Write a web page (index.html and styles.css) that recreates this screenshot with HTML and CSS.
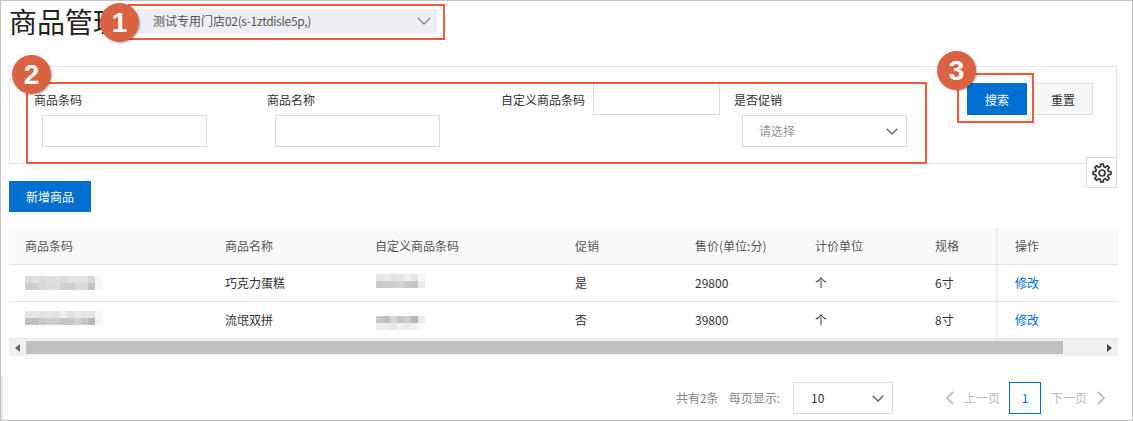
FILE: index.html
```html
<!DOCTYPE html>
<html lang="zh-CN">
<head>
<meta charset="utf-8">
<title>商品管理</title>
<link rel="stylesheet" href="styles.css">
</head>
<body>
<div class="page">
  <header class="head">
    <h1 class="title">商品管理</h1>
    <div class="store">
      <span>测试专用门店<span class="latin">02(s-1ztdisle5p,)</span></span>
      <svg class="chev" width="14" height="8" viewBox="0 0 14 8"><path d="M1 1l6 6 6-6" fill="none" stroke="#7d8794" stroke-width="1.3"/></svg>
    </div>
  </header>

  <section class="filter">
    <div class="field f1">
      <label class="lab">商品条码</label>
      <div class="input stack"></div>
    </div>
    <div class="field f2">
      <label class="lab">商品名称</label>
      <div class="input stack"></div>
    </div>
    <div class="field f3">
      <label class="lab inline">自定义商品条码</label>
      <div class="input short"></div>
    </div>
    <div class="field f4">
      <label class="lab">是否促销</label>
      <div class="input stack select">
        <span class="ph">请选择</span>
        <svg width="12" height="7" viewBox="0 0 12 7"><path d="M.7.7L6 6l5.300-5.300" fill="none" stroke="#666" stroke-width="1.300"/></svg>
      </div>
    </div>
    <div class="actions">
      <button class="btn primary">搜索</button>
      <button class="btn plain">重置</button>
    </div>
  </section>

  <div class="toolbar">
    <button class="btn primary add">新增商品</button>
    <button class="gear" aria-label="设置">
      <svg width="20" height="20" viewBox="0 0 20 20" fill="none" stroke="#3a3a3a" stroke-width="1.700" stroke-linejoin="round">
        <path d="M8.460 3.580L8.590 1.110H11.410L11.540 3.580L13.450 4.370L15.290 2.720L17.280 4.710L15.630 6.550L16.420 8.460L18.890 8.590V11.410L16.420 11.540L15.630 13.450L17.280 15.290L15.290 17.280L13.450 15.630L11.540 16.420L11.410 18.890H8.590L8.460 16.420L6.550 15.630L4.710 17.280L2.720 15.290L4.370 13.450L3.580 11.540L1.110 11.410V8.590L3.580 8.460L4.370 6.550L2.720 4.710L4.710 2.720L6.550 4.370Z"/>
        <circle cx="10" cy="10" r="3"/>
      </svg>
    </button>
  </div>

  <div class="tablewrap">
    <table class="grid">
      <colgroup>
        <col class="c1"><col class="c2"><col class="c3"><col class="c4"><col class="c5"><col class="c6"><col class="c7"><col class="c8">
      </colgroup>
      <thead>
        <tr><th>商品条码</th><th>商品名称</th><th>自定义商品条码</th><th>促销</th><th>售价(单位:分)</th><th>计价单位</th><th>规格</th><th class="fixed">操作</th></tr>
      </thead>
      <tbody>
        <tr>
          <td class="blurcell"><svg class="mosaic" width="84" height="36" viewBox="0 0 84 36">
            <g transform="translate(0 11)"><rect width="7" height="7" fill="#dcdada"/><rect x="7" width="7" height="7" fill="#e2e0de"/><rect x="14" width="7" height="7" fill="#dedada"/><rect x="21" width="7" height="7" fill="#dde0e2"/><rect x="28" width="7" height="7" fill="#dfdfdf"/><rect x="35" width="7" height="7" fill="#dadada"/><rect x="42" width="7" height="7" fill="#e2e2de"/><rect x="49" width="7" height="7" fill="#dfe3e5"/><rect x="56" width="7" height="7" fill="#e2e0e0"/><rect x="63" width="7" height="7" fill="#d6d6d6"/><rect x="70" width="7" height="7" fill="#f4f8fb"/>
            <rect y="7" width="7" height="7" fill="#cdcbcb"/><rect x="7" y="7" width="7" height="7" fill="#d0cfcd"/><rect x="14" y="7" width="7" height="7" fill="#dbd9d9"/><rect x="21" y="7" width="7" height="7" fill="#dedfdc"/><rect x="28" y="7" width="7" height="7" fill="#dcdfe0"/><rect x="35" y="7" width="7" height="7" fill="#cfd1d1"/><rect x="42" y="7" width="7" height="7" fill="#cdcec8"/><rect x="49" y="7" width="7" height="7" fill="#d6dcdd"/><rect x="56" y="7" width="7" height="7" fill="#dbdada"/><rect x="63" y="7" width="7" height="7" fill="#c3c3c3"/><rect x="70" y="7" width="7" height="7" fill="#f6fafc"/></g>
          </svg></td>
          <td>巧克力蛋糕</td>
          <td class="blurcell"><svg class="mosaic" width="56" height="36" viewBox="0 0 56 36">
            <g transform="translate(0 9)"><rect width="7" height="7" fill="#e6e4e4"/><rect x="7" width="7" height="7" fill="#ebeaea"/><rect x="14" width="7" height="7" fill="#e5e4e4"/><rect x="21" width="7" height="7" fill="#e7e6e6"/><rect x="28" width="7" height="7" fill="#efeeec"/><rect x="35" width="7" height="7" fill="#e5e4e3"/><rect x="42" width="7" height="7" fill="#f6f7f9"/>
            <rect y="7" width="7" height="7" fill="#cdcac9"/><rect x="7" y="7" width="7" height="7" fill="#cfcdcc"/><rect x="14" y="7" width="7" height="7" fill="#d2d0cf"/><rect x="21" y="7" width="7" height="7" fill="#d4d2d0"/><rect x="28" y="7" width="7" height="7" fill="#cbc9c5"/><rect x="35" y="7" width="7" height="7" fill="#c8c6c2"/><rect x="42" y="7" width="7" height="7" fill="#e8ebf2"/></g>
          </svg></td>
          <td>是</td><td>29800</td><td>个</td><td>6寸</td><td class="fixed"><a class="link">修改</a></td>
        </tr>
        <tr>
          <td class="blurcell"><svg class="mosaic" width="84" height="36" viewBox="0 0 84 36">
            <g transform="translate(0 9)"><rect width="7" height="7" fill="#e6e5e5"/><rect x="7" width="7" height="7" fill="#e8e6e6"/><rect x="14" width="7" height="7" fill="#e4e2e2"/><rect x="21" width="7" height="7" fill="#e6e6e6"/><rect x="28" width="7" height="7" fill="#e3e3e5"/><rect x="35" width="7" height="7" fill="#f0f0ee"/><rect x="42" width="7" height="7" fill="#e2e2e0"/><rect x="49" width="7" height="7" fill="#e6e8ea"/><rect x="56" width="7" height="7" fill="#eae8e6"/><rect x="63" width="7" height="7" fill="#e6e5e5"/><rect x="70" width="7" height="7" fill="#f6fafc"/>
            <rect y="7" width="7" height="7" fill="#c2c0c0"/><rect x="7" y="7" width="7" height="7" fill="#bfbebe"/><rect x="14" y="7" width="7" height="7" fill="#cbc8c8"/><rect x="21" y="7" width="7" height="7" fill="#cfcdcd"/><rect x="28" y="7" width="7" height="7" fill="#cccccc"/><rect x="35" y="7" width="7" height="7" fill="#c6c6c4"/><rect x="42" y="7" width="7" height="7" fill="#c6c8c2"/><rect x="49" y="7" width="7" height="7" fill="#ccd4d5"/><rect x="56" y="7" width="7" height="7" fill="#c9c6c6"/><rect x="63" y="7" width="7" height="7" fill="#b5b4b8"/><rect x="70" y="7" width="7" height="7" fill="#f1f6fb"/></g>
          </svg></td>
          <td>流氓双拼</td>
          <td class="blurcell"><svg class="mosaic" width="56" height="36" viewBox="0 0 56 36">
            <g transform="translate(0 14)"><rect width="7" height="7" fill="#c9c6c6"/><rect x="7" width="7" height="7" fill="#c2c1bf"/><rect x="14" width="7" height="7" fill="#d6d6d4"/><rect x="21" width="7" height="7" fill="#c5c5c7"/><rect x="28" width="7" height="7" fill="#cdcece"/><rect x="35" width="7" height="7" fill="#bdb5af"/><rect x="42" width="7" height="7" fill="#e2ebf6"/>
            <rect y="7" width="7" height="7" fill="#eeecec"/><rect x="7" y="7" width="7" height="7" fill="#eeeeee"/><rect x="14" y="7" width="7" height="7" fill="#e8e8e8"/><rect x="21" y="7" width="7" height="7" fill="#f1f1f1"/><rect x="28" y="7" width="7" height="7" fill="#ebebeb"/><rect x="35" y="7" width="7" height="7" fill="#f3f2f1"/><rect x="42" y="7" width="7" height="7" fill="#f8fbfe"/></g>
          </svg></td>
          <td>否</td><td>39800</td><td>个</td><td>8寸</td><td class="fixed"><a class="link">修改</a></td>
        </tr>
      </tbody>
    </table>
    <div class="scrollbar">
      <span class="sarrow"><svg width="5" height="8" viewBox="0 0 5 8"><path d="M5 0v8L0 4z" fill="#666"/></svg></span>
      <span class="thumb"></span>
      <span class="srest"></span>
      <span class="sarrow"><svg width="5" height="8" viewBox="0 0 5 8"><path d="M0 0v8l5-4z" fill="#444"/></svg></span>
    </div>
  </div>

  <nav class="pager">
    <span class="muted">共有2条</span>
    <span class="muted perpage">每页显示:</span>
    <div class="input size">
      <span>10</span>
      <svg width="12" height="7" viewBox="0 0 12 7"><path d="M.7.7L6 6l5.300-5.300" fill="none" stroke="#666" stroke-width="1.500"/></svg>
    </div>
    <svg class="pchev" width="9" height="14" viewBox="0 0 9 14"><path d="M8 1L2 7l6 6" fill="none" stroke="#bdbdbd" stroke-width="1.800"/></svg>
    <span class="off prev">上一页</span>
    <span class="cur">1</span>
    <span class="off next">下一页</span>
    <svg class="pchev right" width="9" height="14" viewBox="0 0 9 14"><path d="M1 1l6 6-6 6" fill="none" stroke="#bdbdbd" stroke-width="1.800"/></svg>
  </nav>

  <div class="mark box1"></div>
  <div class="mark box2"></div>
  <div class="mark box3"></div>
  <div class="badge b1">1</div>
  <div class="badge b2">2</div>
  <div class="badge b3">3</div>
  <div class="edge"></div>
</div>
</body>
</html>
```
FILE: styles.css
```css
* { box-sizing: border-box; }
html, body { margin: 0; height: 100%; }
body { background: #fff; color: #333; font: 12px/1.5 "Noto Sans CJK SC", "Noto Sans", sans-serif; overflow: hidden; }
.page { position: relative; height: 421px; padding: 0 14px 0 8px; border: 1px solid #c4c4c4; }

.head { display: flex; height: 65px; align-items: flex-start; }
.title { margin: 5px 0 0; font-size: 28px; font-weight: 400; line-height: 30px; color: #222; }
.store { display: flex; align-items: center; justify-content: space-between; width: 300px; height: 24px; margin: 8px 0 0 16px; padding: 0 6px 0 16px; background: #eceff4; color: #555; font-size: 12px; }
.latin { letter-spacing: -.35px; }

.filter { display: flex; height: 98px; margin-right: 1px; padding: 16px 23px 0 24px; border: 1px solid #e6e6e6; }
.field { flex: none; }
.f1 { width: 233px; }
.f2 { width: 234px; }
.f3 { width: 233px; display: flex; align-items: flex-start; }
.lab { display: block; height: 32px; padding-top: 1px; line-height: 32px; color: #333; }
.inline { margin-right: 8px; }
.input { border: 1px solid #dcdcdc; background: #fff; }
.stack { width: 165px; height: 32px; margin-left: 8px; }
.short { width: 127px; height: 32px; }
.select { display: flex; align-items: center; justify-content: space-between; padding: 0 8px 0 16px; }
.ph { color: #999; }
.actions { display: flex; gap: 6px; margin-left: auto; }
.btn { height: 32px; width: 60px; padding: 1px 0 0; border: 1px solid #dcdcdc; font: inherit; }
.primary { background: #006fcf; border-color: #006fcf; color: #fff; }
.plain { background: #f8f8f8; color: #333; }

.toolbar { display: flex; justify-content: space-between; align-items: flex-start; margin-top: 17px; height: 47px; }
.add { width: 82px; height: 31px; padding: 0; }
.gear { position: relative; display: flex; align-items: center; justify-content: center; width: 31px; height: 31px; margin: -24px 1px 0 0; padding: 0; background: #fff; border: 1px solid #dcdcdc; }

.tablewrap { width: 1109px; }
.grid { width: 1109px; table-layout: fixed; border-collapse: separate; border-spacing: 0; }
.c1 { width: 200px; } .c2 { width: 150px; } .c3 { width: 200px; } .c4 { width: 120px; }
.c5 { width: 120px; } .c6 { width: 120px; } .c7 { width: 79px; } .c8 { width: 120px; }
.grid th, .grid td { height: 37px; padding: 0 0 0 16px; border-bottom: 1px solid #e8e8e8; text-align: left; font-weight: 400; }
.grid th { background: #fafafa; color: #555; }
.grid td { color: #333; }
.mosaic { display: block; }
.grid tbody td:nth-child(3) svg { margin-left: 1px; }
.grid .fixed { position: relative; padding-left: 17px; background: #fff; box-shadow: -2px 0 2px rgba(0,0,0,.06); }
.grid th.fixed { background: #fafafa; }
.link { color: #0070cc; }

.scrollbar { display: flex; align-items: center; height: 17px; background: #f1f1f1; }
.sarrow { display: flex; flex: none; align-items: center; justify-content: center; width: 17px; height: 17px; }
.thumb { flex: none; width: 1037px; height: 13px; background: #c1c1c1; }
.srest { flex: 1; }

.pager { display: flex; align-items: center; height: 32px; margin-top: 26px; padding-right: 12px; color: #333; }
.muted { color: #888; }
.pager .muted:first-child { margin-left: auto; }
.perpage { margin: 0 13px 0 10px; }
.size { display: flex; align-items: center; justify-content: space-between; width: 100px; height: 32px; padding: 0 8px 0 17px; }
.pchev { margin-left: 52px; }
.pchev.right { margin-left: 10px; }
.off { color: #bbb; }
.prev { margin-left: 10px; }
.next { margin-left: 10px; }
.cur { width: 32px; height: 32px; margin-left: 9px; border: 1px solid #0070cc; line-height: 30px; text-align: center; color: #0070cc; }

.mark { position: absolute; border: 2px solid #f05a38; }
.box1 { left: 127px; top: 3px; width: 317px; height: 36px; }
.box2 { left: 25px; top: 81px; width: 901px; height: 82px; }
.box3 { left: 956px; top: 72px; width: 77px; height: 50px; }
.badge { position: absolute; width: 39px; height: 39px; border-radius: 50%; background: #da6344; color: #fff; box-shadow: 1px 1px 2px rgba(0,0,0,.3); font: 700 28px/39px "Liberation Sans", Arial, sans-serif; text-align: center; }
.b1 { left: 99px; top: 2px; }
.b2 { left: 11px; top: 54px; }
.b3 { left: 936px; top: 50px; }
.edge { position: absolute; left: 0; top: 375px; bottom: 0; width: 2px; background: #e8e8e8; }
```
